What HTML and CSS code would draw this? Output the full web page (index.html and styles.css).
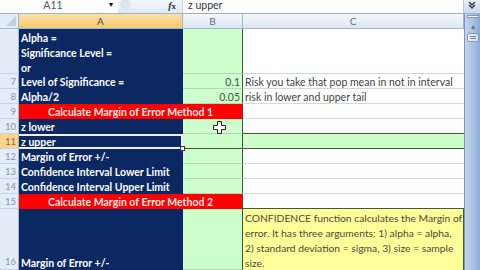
FILE: index.html
```html
<!DOCTYPE html>
<html>
<head>
	<title>Margin of Error</title>
	<meta charset="utf-8">
	<link rel="stylesheet" href="styles.css">
</head>
<body>
	<div class="window">
		<div class="formula_bar">
			<div class="name_box">A11<span class="drop">&#9662;</span></div>
			<div class="fx_area">
				<span class="grip"></span>
				<span class="fx"><i>f</i>x</span>
			</div>
			<div class="formula_input">z upper</div>
			<div class="expand_btn">
				<svg width="10" height="10" viewBox="0 0 10 10"><path d="M2 2l3 3 3-3M2 5l3 3 3-3" fill="none" stroke="#334" stroke-width="1.3"/></svg>
			</div>
		</div>
		<div class="sheet">
			<div class="grid">
				<div class="corner"><span></span></div>
				<div class="col_head active">A</div>
				<div class="col_head">B</div>
				<div class="col_head">C</div>

				<div class="row_head"></div>
				<div class="cell a wrap">Alpha =<br>Significance Level =<br>or</div>
				<div class="cell b"></div>
				<div class="cell c"></div>

				<div class="row_head">7</div>
				<div class="cell a">Level of Significance =</div>
				<div class="cell b num">0.1</div>
				<div class="cell c">Risk you take that pop mean in not in interval</div>

				<div class="row_head">8</div>
				<div class="cell a">Alpha/2</div>
				<div class="cell b num">0.05</div>
				<div class="cell c">risk in lower and upper tail</div>

				<div class="row_head">9</div>
				<div class="cell red">Calculate Margin of Error Method 1</div>
				<div class="cell c"></div>

				<div class="row_head">10</div>
				<div class="cell a">z lower</div>
				<div class="cell b pointer_cell">
					<svg class="pointer" width="13" height="13" viewBox="0 0 13 13"><path d="M4.5 0.5h4v4h4v4h-4v4h-4v-4h-4v-4h4z" fill="#fff" stroke="#222" stroke-width="1"/></svg>
				</div>
				<div class="cell c"></div>

				<div class="row_head active">11</div>
				<div class="cell a selected">z upper<span class="handle"></span></div>
				<div class="cell b edge"></div>
				<div class="cell c green edge"></div>

				<div class="row_head">12</div>
				<div class="cell a">Margin of Error +/-</div>
				<div class="cell b"></div>
				<div class="cell c"></div>

				<div class="row_head">13</div>
				<div class="cell a">Confidence Interval Lower Limit</div>
				<div class="cell b"></div>
				<div class="cell c"></div>

				<div class="row_head">14</div>
				<div class="cell a">Confidence Interval Upper Limit</div>
				<div class="cell b"></div>
				<div class="cell c"></div>

				<div class="row_head">15</div>
				<div class="cell red">Calculate Margin of Error Method 2</div>
				<div class="cell c dark_bottom"></div>

				<div class="row_head bottom">16</div>
				<div class="cell a bottom">Margin of Error +/-</div>
				<div class="cell b"></div>
				<div class="cell c note">CONFIDENCE function calculates the Margin of<br>error. It has three arguments: 1) alpha = alpha,<br>2) standard deviation = sigma, 3) size = sample<br>size.</div>
			</div>
			<div class="vscroll">
				<div class="split"></div>
				<div class="arrow_up">&#9652;</div>
				<div class="thumb"><span></span></div>
			</div>
		</div>
	</div>
</body>
</html>
```

FILE: styles.css
```css
*{
	box-sizing:border-box;
	margin:0;
	padding:0;
}
body{
	width:480px;
	height:270px;
	overflow:hidden;
	background:#fff;
	font-family:Lato,"Liberation Sans",sans-serif;
}
.window{
	width:480px;
	height:270px;
	display:flex;
	flex-direction:column;
}
.formula_bar{
	height:14px;
	display:flex;
	border-bottom:1px solid #9fb1c9;
	background:#eef2f8;
	font-size:10.5px;
	color:#555;
}
.name_box{
	width:118px;
	background:#fff;
	position:relative;
	text-align:center;
	line-height:11px;
	padding-right:12px;
}
.name_box .drop{
	position:absolute;
	right:5px;
	top:-1px;
	font-size:8px;
	color:#111;
}
.fx_area{
	width:65px;
	display:flex;
	align-items:center;
	justify-content:space-between;
	padding:0 6px 0 2px;
	background:linear-gradient(#f4f7fb,#e3e9f2);
	border-right:1px solid #c7d2e0;
}
.grip{
	width:11px;
	height:11px;
	border-radius:50%;
	background:#dfe4ea;
	margin-top:-4px;
}
.fx{
	font-family:"Liberation Serif",serif;
	font-size:9px;
	color:#333;
	font-weight:bold;
	margin-top:-3px;
}
.fx i{
	font-size:10px;
}
.formula_input{
	flex:1;
	background:#fff;
	padding-left:5px;
	line-height:10px;
	color:#333;
}
.expand_btn{
	width:17px;
	background:linear-gradient(#e9eff8,#c9d7ec);
	border-left:1px solid #b6c5da;
	display:flex;
	justify-content:center;
	align-items:flex-start;
}
.sheet{
	flex:1;
	display:flex;
	overflow:hidden;
}
.grid{
	width:464px;
	display:grid;
	grid-template-columns:19px 164px 60px 221px;
	grid-template-rows:15px 45px repeat(9,15px) 61px;
	font-size:10.5px;
}
.corner{
	background:#e4ecf7;
	border-right:1px solid #9eb6ce;
	border-bottom:1px solid #9eb6ce;
	position:relative;
}
.corner span{
	position:absolute;
	right:2px;
	bottom:2px;
	border-left:10px solid transparent;
	border-bottom:10px solid #c2cfe0;
}
.col_head{
	background:linear-gradient(#f5f8fc,#dde6f2);
	border-right:1px solid #9eb6ce;
	border-bottom:1px solid #9eb6ce;
	text-align:center;
	line-height:14px;
	color:#5b6d86;
	font-size:10px;
}
.col_head.active{
	background:linear-gradient(#fbe2ac,#f4c76b);
	color:#4a4a4a;
}
.row_head{
	background:#e4ecf7;
	border-right:1px solid #9eb6ce;
	border-bottom:1px solid #c5d3e3;
	color:#8596ad;
	font-size:9.5px;
	text-align:right;
	padding-right:2px;
	padding-top:1px;
	line-height:14px;
}
.row_head.active{
	background:#f8d48c;
	color:#7a6a4a;
}
.row_head.bottom{
	display:flex;
	align-items:flex-end;
	justify-content:flex-end;
}
.cell{
	line-height:14px;
	padding-top:1px;
	white-space:nowrap;
	overflow:hidden;
}
.a{
	background:#0b2863;
	color:#fff;
	font-weight:bold;
	padding-left:2px;
}
.a.wrap{
	line-height:15px;
	padding-top:2px;
}
.a.bottom{
	display:flex;
	align-items:flex-end;
	padding-bottom:0;
}
.a.selected{
	position:relative;
	border:2px solid #eef0f2;
	border-left:none;
	line-height:12px;
	padding-top:0;
	overflow:visible;
}
.handle{
	position:absolute;
	right:-4px;
	bottom:-4px;
	width:5px;
	height:5px;
	background:#fff;
	border:1px solid #333;
}
.b{
	background:#ccffcc;
	border-bottom:1px solid #b5d6b5;
	border-right:1px solid #3d5a3d;
	color:#3c5a3c;
}
.num{
	text-align:right;
	padding-right:2px;
}
.pointer_cell{
	position:relative;
	overflow:visible;
}
.pointer{
	position:absolute;
	left:30px;
	top:2px;
}
.c{
	background:#fff;
	border-bottom:1px solid #d0d7e5;
	color:#444;
	padding-left:2px;
}
.green{
	background:#ccffcc;
}
.edge{
	border-top:1px solid #3d5a3d;
	border-bottom:1px solid #3d5a3d;
	margin-top:-1px;
}
.dark_bottom{
	border-bottom:1px solid #3d5a3d;
}
.red{
	grid-column:span 2;
	background:#ff0000;
	color:#fde9e9;
	font-weight:bold;
	text-align:center;
	border-right:1px solid #3d5a3d;
}
.note{
	background:#ffff99;
	border-right:1px solid #3d5a3d;
	border-bottom:none;
	line-height:15px;
	padding:2px 0 0 2px;
	font-size:10.3px;
	color:#4a4a3a;
}
.vscroll{
	flex:1;
	background:linear-gradient(to right,#c4d5ee,#a6bfe3 60%,#8faad7);
	border-left:1px solid #7c96bd;
	display:flex;
	flex-direction:column;
	align-items:center;
}
.split{
	width:12px;
	height:3px;
	background:#fff;
	margin-top:1px;
	border:1px solid #7f97bb;
}
.arrow_up{
	font-size:8px;
	color:#5a6f90;
	margin-top:3px;
}
.thumb{
	width:12px;
	height:9px;
	background:linear-gradient(to right,#f5f8fd,#d3def0);
	border:1px solid #7f97bb;
	border-radius:2px;
	margin-top:2px;
	display:flex;
	align-items:center;
	justify-content:center;
}
.thumb span{
	width:6px;
	height:3px;
	border-top:1px solid #6c82a8;
	border-bottom:1px solid #6c82a8;
}
```
